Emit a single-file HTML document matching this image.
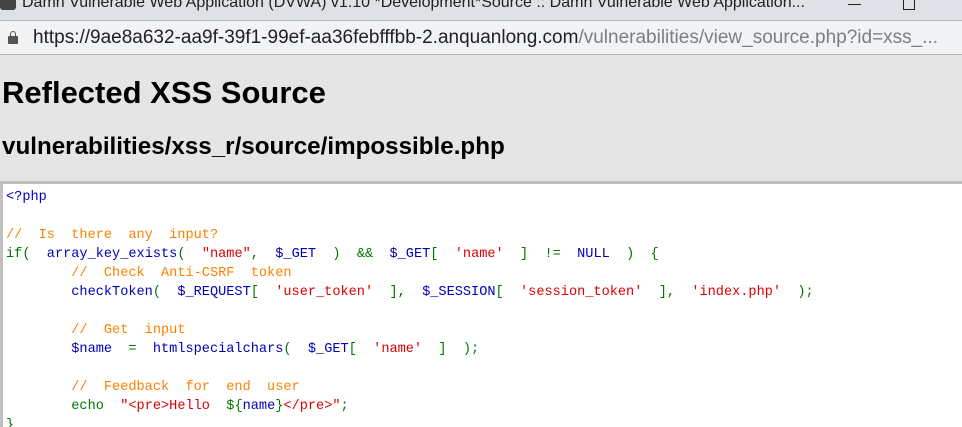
<!DOCTYPE html>
<html><head><meta charset="utf-8"><style>
*{margin:0;padding:0;box-sizing:border-box}
html,body{width:962px;height:427px;overflow:hidden}
body{background:#e5e5e5;font-family:"Liberation Sans",sans-serif;position:relative}
.tb{position:absolute;left:0;top:0;width:962px;height:20px;background:#dee1e6;overflow:hidden}
.tb .t{position:absolute;left:22px;top:-6px;font-size:16px;color:#222;white-space:nowrap}
.tb .ic{position:absolute;left:0;top:-6px;width:16px;height:16px;background:#444;border-radius:3px}
.tb .min{position:absolute;left:848px;top:4px;width:13px;height:1px;background:#222}
.tb .max{position:absolute;left:903px;top:-4px;width:12px;height:14px;border:1px solid #222}
.ub{position:absolute;left:0;top:20px;width:962px;height:35px;background:#f1f3f4;border-top:1px solid #b8b8b8;border-bottom:1px solid #b8b8b8}
.ub .lk{position:absolute;left:8px;top:15px;width:10px;height:8px;background:#555;border-radius:1px}
.ub .lk:before{content:"";position:absolute;left:2px;top:-5px;width:6px;height:7px;border:1.5px solid #555;border-radius:3px 3px 0 0;box-sizing:border-box}
.ub .u{position:absolute;left:33px;top:6px;font-size:19px;color:#202124;white-space:nowrap}
.ub .u span{color:#7a7f86}
h1{position:absolute;left:2px;top:75px;font-size:31px;font-weight:bold;color:#000;white-space:nowrap}
h2{position:absolute;left:2px;top:133px;font-size:24.2px;font-weight:bold;color:#000;white-space:nowrap}
.code{position:absolute;left:0;top:181px;width:962px;height:246px;background:#fff;border:3px solid #c0c0c0;border-right:none;border-bottom:none;overflow:hidden}
pre{position:absolute;left:3px;top:4px;font-family:"Liberation Mono",monospace;font-size:13.6px;line-height:19px;color:#0000bb;white-space:pre}
.g{color:#007700}.o{color:#ff8000}.r{color:#dd0000}.b{color:#0000bb}
</style></head><body>
<div class="tb"><div class="ic"></div><div class="t">Damn Vulnerable Web Application (DVWA) v1.10 *Development*Source :: Damn Vulnerable Web Application...</div><div class="min"></div><div class="max"></div></div>
<div class="ub"><div class="lk"></div><div class="u">https://9ae8a632-aa9f-39f1-99ef-aa36febfffbb-2.anquanlong.com<span>/vulnerabilities/view_source.php?id=xss_...</span></div></div>
<h1>Reflected XSS Source</h1>
<h2>vulnerabilities/xss_r/source/impossible.php</h2>
<div class="code"><pre><span class="b">&lt;?php</span>

<span class="o">//  Is  there  any  input?</span>
<span class="g">if(  </span><span class="b">array_key_exists</span><span class="g">(  </span><span class="r">"name"</span><span class="g">,  </span><span class="b">$_GET  </span><span class="g">)  &amp;&amp;  </span><span class="b">$_GET</span><span class="g">[  </span><span class="r">'name'  </span><span class="g">]  !=  </span><span class="b">NULL  </span><span class="g">)  {</span>
        <span class="o">//  Check  Anti-CSRF  token</span>
        <span class="b">checkToken</span><span class="g">(  </span><span class="b">$_REQUEST</span><span class="g">[  </span><span class="r">'user_token'  </span><span class="g">],  </span><span class="b">$_SESSION</span><span class="g">[  </span><span class="r">'session_token'  </span><span class="g">],  </span><span class="r">'index.php'  </span><span class="g">);</span>

        <span class="o">//  Get  input</span>
        <span class="b">$name  </span><span class="g">=  </span><span class="b">htmlspecialchars</span><span class="g">(  </span><span class="b">$_GET</span><span class="g">[  </span><span class="r">'name'  </span><span class="g">]  );</span>

        <span class="o">//  Feedback  for  end  user</span>
        <span class="g">echo  </span><span class="r">"&lt;pre&gt;Hello  </span><span class="g">${</span><span class="b">name</span><span class="g">}</span><span class="r">&lt;/pre&gt;"</span><span class="g">;</span>
<span class="g">}</span></pre></div>
</body></html>
